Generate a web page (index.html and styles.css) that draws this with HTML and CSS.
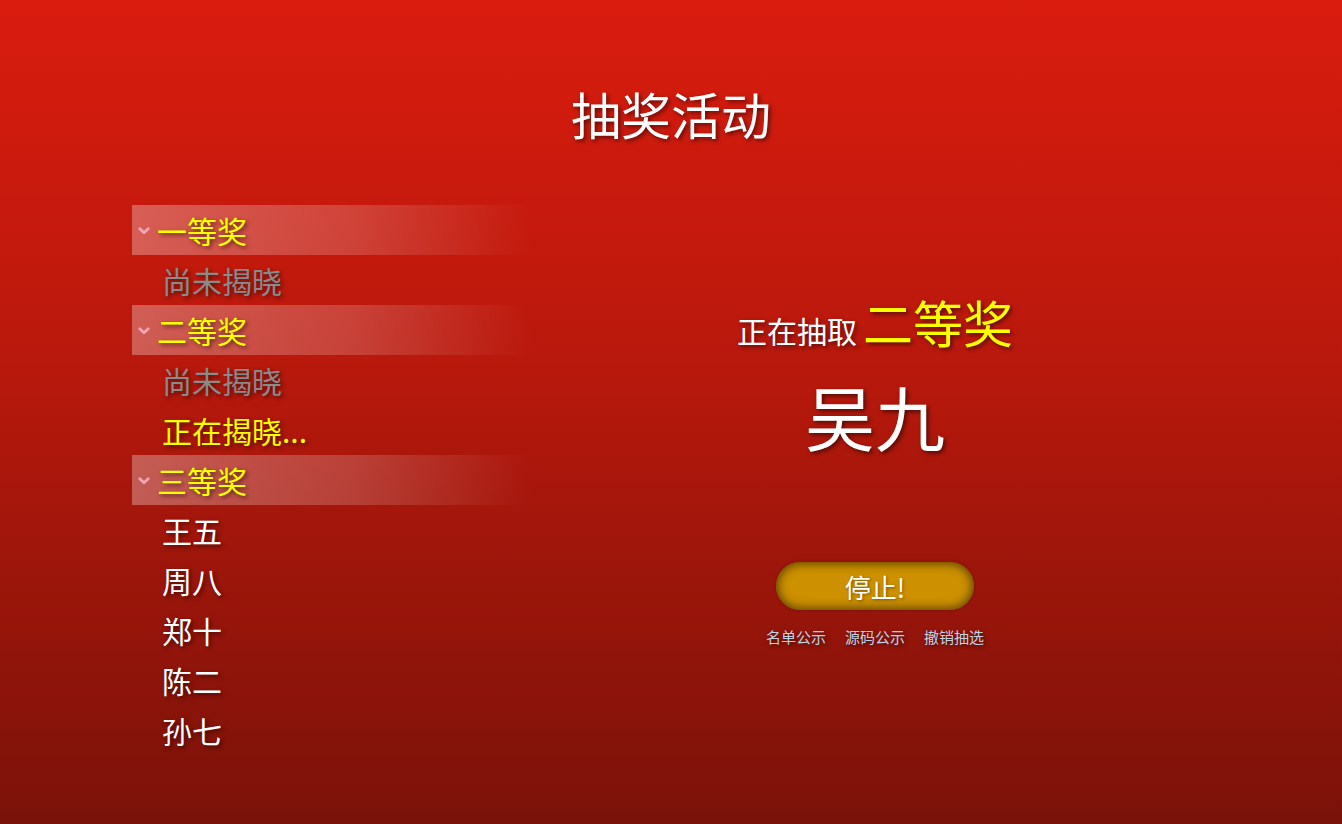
FILE: index.html
```html
<!DOCTYPE html>
<html lang="zh-CN">
<head>
<meta charset="utf-8">
<title>抽奖活动</title>
<link rel="stylesheet" href="styles.css">
</head>
<body>
<h1 class="title">抽奖活动</h1>
<main class="main">
  <section class="list">
    <div class="prize-head"><span class="chev"><svg width="12" height="8" viewBox="0 0 12 8"><path d="M1.8 1.8 L6 5.8 L10.2 1.8" fill="none" stroke="#f4a6b8" stroke-width="2.8" stroke-linecap="round" stroke-linejoin="round"/></svg></span>一等奖</div>
    <div class="item pending">尚未揭晓</div>
    <div class="prize-head"><span class="chev"><svg width="12" height="8" viewBox="0 0 12 8"><path d="M1.8 1.8 L6 5.8 L10.2 1.8" fill="none" stroke="#f4a6b8" stroke-width="2.8" stroke-linecap="round" stroke-linejoin="round"/></svg></span>二等奖</div>
    <div class="item pending">尚未揭晓</div>
    <div class="item active">正在揭晓...</div>
    <div class="prize-head"><span class="chev"><svg width="12" height="8" viewBox="0 0 12 8"><path d="M1.8 1.8 L6 5.8 L10.2 1.8" fill="none" stroke="#f4a6b8" stroke-width="2.8" stroke-linecap="round" stroke-linejoin="round"/></svg></span>三等奖</div>
    <div class="item">王五</div>
    <div class="item">周八</div>
    <div class="item">郑十</div>
    <div class="item">陈二</div>
    <div class="item">孙七</div>
  </section>
  <section class="draw">
    <div class="drawing"><span class="label">正在抽取</span><span class="prize">二等奖</span></div>
    <div class="winner">吴九</div>
    <button class="stop">停止!</button>
    <nav class="links"><a>名单公示</a><a>源码公示</a><a>撤销抽选</a></nav>
  </section>
</main>
</body>
</html>
```
FILE: styles.css
```css
html, body {
  margin: 0;
  padding: 0;
}
body {
  width: 1342px;
  height: 824px;
  overflow: hidden;
  background: linear-gradient(180deg, #d91c0e 0%, #b8180c 45%, #7a1209 100%);
  font-family: "Microsoft YaHei", "Noto Sans CJK SC", "Noto Sans", sans-serif;
  color: #fff;
  text-shadow: 2px 2px 4px rgba(0, 0, 0, 0.55);
}
.title {
  margin: 0;
  padding-top: 83px;
  font-size: 50px;
  line-height: 60px;
  font-weight: normal;
  text-align: center;
}
.main {
  display: grid;
  grid-template-columns: 400px 1fr;
  column-gap: 6px;
  width: 1080px;
  margin: 62px auto 0;
  padding-left: 2px;
}
.list {
  display: flex;
  flex-direction: column;
}
.prize-head {
  display: flex;
  align-items: center;
  height: 50px;
  padding-left: 6px;
  font-size: 30px;
  color: #ffff00;
  background: linear-gradient(90deg, rgba(255, 255, 255, 0.3) 0%, rgba(255, 255, 255, 0.18) 55%, rgba(255, 255, 255, 0) 100%);
}
.chev {
  display: inline-flex;
  width: 19px;
  align-items: center;
  justify-content: flex-start;
  text-shadow: none;
  margin-top: 2px;
}
.item {
  height: 50px;
  line-height: 50px;
  padding-left: 30px;
  font-size: 30px;
  color: #fff;
}
.item.pending {
  color: #8a8a8a;
}
.item.active {
  color: #ffff00;
}
.draw {
  display: flex;
  flex-direction: column;
  align-items: center;
  padding-top: 86px;
}
.drawing {
  display: flex;
  align-items: baseline;
  gap: 6px;
  height: 60px;
  line-height: 60px;
}
.label {
  font-size: 30px;
}
.prize {
  font-size: 50px;
  color: #ffff00;
}
.winner {
  margin-top: 25px;
  font-size: 70px;
  line-height: 80px;
}
.stop {
  margin-top: 106px;
  width: 198px;
  height: 48px;
  border: none;
  border-radius: 24px;
  background: #cc9000;
  box-shadow: inset 0 0 10px 2px rgba(60, 40, 0, 0.75), 0 0 3px rgba(0, 0, 0, 0.3);
  color: #fff;
  font-family: inherit;
  font-size: 26px;
  text-shadow: 1px 1px 3px rgba(0, 0, 0, 0.4);
  padding: 0;
}
.links {
  display: flex;
  gap: 19px;
  margin-top: 17px;
  line-height: 20px;
  font-size: 15px;
}
.links a {
  color: #c3d3e3;
}
```
